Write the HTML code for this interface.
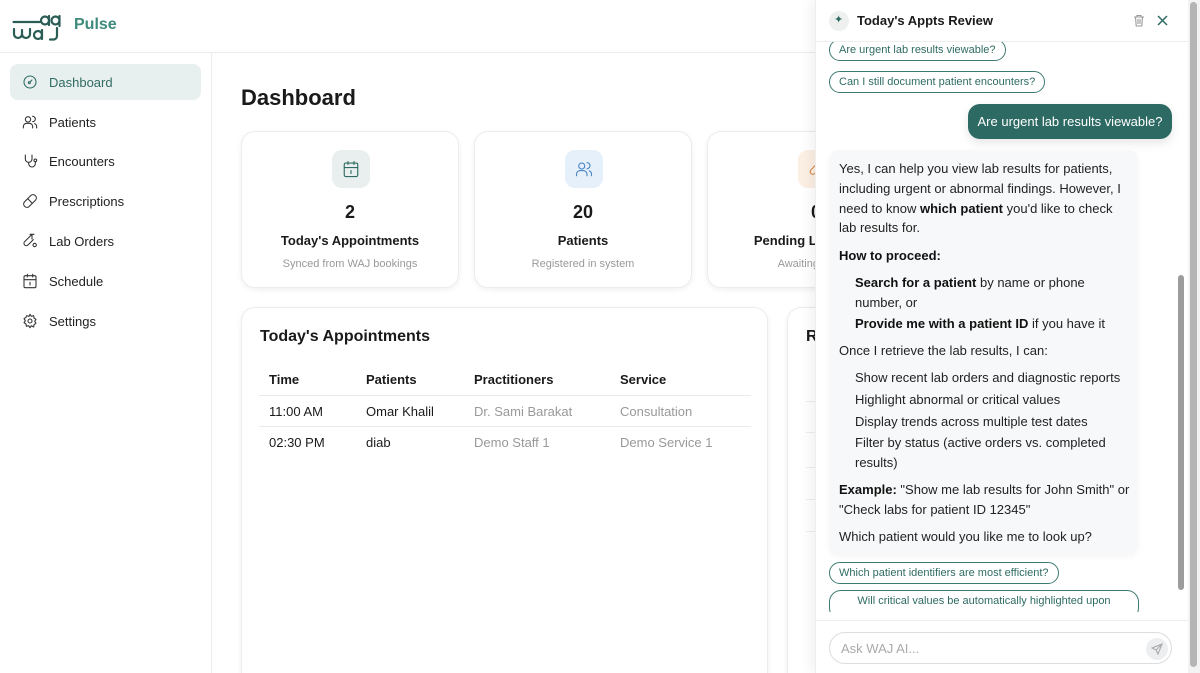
<!DOCTYPE html>
<html><head><meta charset="utf-8"><style>
*{box-sizing:border-box;margin:0;padding:0}
html,body{width:1200px;height:673px;overflow:hidden}
body{background:#fff;font-family:"Liberation Sans",sans-serif;color:#1a1a1a;position:relative}
.a{position:absolute;white-space:nowrap}
.nav{position:absolute;left:10px;width:191px;height:36px;border-radius:8px;font-size:13px;color:#222;display:flex;align-items:center}
.nav svg{position:absolute;left:12px;width:16px;height:16px;fill:none;stroke:#333;stroke-width:1.6;stroke-linecap:round;stroke-linejoin:round}
.nav span{position:absolute;left:39px}
.card{position:absolute;background:#fff;border:1px solid #ececec;border-radius:14px;box-shadow:0 2px 6px rgba(0,0,0,.06)}
.ic{position:absolute;width:38px;height:38px;border-radius:10px;left:90px;top:18px}
.ic svg{position:absolute;left:10px;top:10px;width:18px;height:18px;fill:none;stroke-width:1.5;stroke-linecap:round;stroke-linejoin:round}
.num{position:absolute;width:100%;text-align:center;top:70px;font-size:18px;font-weight:bold}
.ttl{position:absolute;width:100%;text-align:center;top:101px;font-size:13px;font-weight:bold}
.sub{position:absolute;width:100%;text-align:center;top:126px;font-size:11px;color:#999}
.chip{position:absolute;height:22px;border:1.3px solid #3d7a70;border-radius:12px;font-size:11px;color:#2f6b62;padding:0 9px;line-height:20px;white-space:nowrap}
.l{position:absolute;left:839px;font-size:13px;line-height:20px;white-space:nowrap;color:#222}
.l b{color:#111}
.ind{left:855px}
</style></head><body>
<div style="position:absolute;left:0;top:0;width:1200px;height:673px;overflow:hidden">
<!-- header -->
<div class="a" style="left:0;top:52px;width:815px;height:1px;background:#ececec"></div>
<svg class="a" style="left:12px;top:14px" width="50" height="27" viewBox="0 0 50 27" fill="none" stroke="#2b5d57" stroke-width="2.2" stroke-linecap="round">
<path d="M1.5 8H28"/><circle cx="33" cy="6.5" r="4"/><path d="M37 2v9"/><circle cx="43.5" cy="6.5" r="4"/><path d="M47.5 2v10"/>
<path d="M2 15v5a4 4 0 0 0 8 0v-4M10 20a4 4 0 0 0 8 0v-5"/><circle cx="26" cy="21" r="4"/><path d="M30 16v9"/><path d="M45 14v8a3.5 3.5 0 0 1-3.5 3.5H38"/>
</svg>
<div class="a" style="left:74px;top:16px;font-size:16px;font-weight:bold;color:#3e8a7c">Pulse</div>
<!-- sidebar -->
<div class="a" style="left:211px;top:53px;width:1px;height:620px;background:#ececec"></div>
<div class="nav" style="top:64px;background:#e8f0ef;color:#2f6b62"><svg viewBox="0 0 24 24" style="stroke:#2f6b62"><circle cx="12" cy="12" r="9"/><path d="M15 9l-3 3"/><circle cx="11" cy="13" r="1.5"/></svg><span>Dashboard</span></div>
<div class="nav" style="top:104px"><svg viewBox="0 0 24 24"><circle cx="9" cy="8" r="4"/><path d="M2 21v-2a5 5 0 0 1 5-5h4a5 5 0 0 1 5 5v2M16 3.5a4 4 0 0 1 0 8M22 21v-2a5 5 0 0 0-3-4.5"/></svg><span>Patients</span></div>
<div class="nav" style="top:143px"><svg viewBox="0 0 24 24"><path d="M5 3v6a5 5 0 0 0 10 0V3M10 14v2a5 5 0 0 0 10 0v-3"/><circle cx="20" cy="11" r="2"/></svg><span>Encounters</span></div>
<div class="nav" style="top:183px"><svg viewBox="0 0 24 24"><path d="M10.5 20.5a5 5 0 0 1-7-7l10-10a5 5 0 0 1 7 7z"/><path d="M8.5 8.5l7 7"/></svg><span>Prescriptions</span></div>
<div class="nav" style="top:223px"><svg viewBox="0 0 24 24"><path d="M14 3L4 13a3.5 3.5 0 0 0 5 5l8-8M12 2h6M15 2v7"/><circle cx="19" cy="18" r="2.5"/></svg><span>Lab Orders</span></div>
<div class="nav" style="top:263px"><svg viewBox="0 0 24 24"><rect x="3" y="4" width="18" height="18" rx="2"/><path d="M16 2v4M8 2v4M3 10h18M12 14v4"/></svg><span>Schedule</span></div>
<div class="nav" style="top:303px"><svg viewBox="0 0 24 24"><circle cx="12" cy="12" r="3"/><path d="M12 2l2 3 3.5-1 .5 3.5 3 2-2 3 2 3-3 2-.5 3.5L14 19l-2 3-2-3-3.5 1-.5-3.5-3-2 2-3-2-3 3-2L7 4l3.5 1z"/></svg><span>Settings</span></div>
<!-- main -->
<div class="a" style="left:241px;top:85px;font-size:22px;font-weight:bold">Dashboard</div>
<div class="card" style="left:241px;top:131px;width:218px;height:157px"><div class="ic" style="background:#e8efee"><svg viewBox="0 0 24 24" stroke="#2f6b62"><rect x="3" y="4" width="18" height="18" rx="2"/><path d="M16 2v4M8 2v4M3 10h18M12 14v4"/></svg></div><div class="num">2</div><div class="ttl">Today's Appointments</div><div class="sub">Synced from WAJ bookings</div></div>
<div class="card" style="left:474px;top:131px;width:218px;height:157px"><div class="ic" style="background:#e6f0fb"><svg viewBox="0 0 24 24" stroke="#4a86c5"><circle cx="9" cy="8" r="4"/><path d="M2 21v-2a5 5 0 0 1 5-5h4a5 5 0 0 1 5 5v2M16 3.5a4 4 0 0 1 0 8M22 21v-2a5 5 0 0 0-3-4.5"/></svg></div><div class="num">20</div><div class="ttl">Patients</div><div class="sub">Registered in system</div></div>
<div class="card" style="left:707px;top:131px;width:218px;height:157px"><div class="ic" style="background:#fcefe3"><svg viewBox="0 0 24 24" stroke="#d98a4a"><path d="M14 3L4 13a3.5 3.5 0 0 0 5 5l8-8"/></svg></div><div class="num">0</div><div class="ttl">Pending Lab Orders</div><div class="sub">Awaiting results</div></div>
<div class="card" style="left:241px;top:307px;width:527px;height:380px">
<div class="a" style="left:18px;top:20px;font-size:16px;font-weight:bold">Today's Appointments</div>
<div class="a" style="left:27px;top:64px;font-size:13px;font-weight:bold">Time</div>
<div class="a" style="left:124px;top:64px;font-size:13px;font-weight:bold">Patients</div>
<div class="a" style="left:232px;top:64px;font-size:13px;font-weight:bold">Practitioners</div>
<div class="a" style="left:378px;top:64px;font-size:13px;font-weight:bold">Service</div>
<div class="a" style="left:17px;top:87px;width:492px;height:1px;background:#eaeaea"></div>
<div class="a" style="left:27px;top:96px;font-size:13px">11:00 AM</div>
<div class="a" style="left:124px;top:96px;font-size:13px">Omar Khalil</div>
<div class="a" style="left:232px;top:96px;font-size:13px;color:#999">Dr. Sami Barakat</div>
<div class="a" style="left:378px;top:96px;font-size:13px;color:#999">Consultation</div>
<div class="a" style="left:17px;top:118px;width:492px;height:1px;background:#eaeaea"></div>
<div class="a" style="left:27px;top:127px;font-size:13px">02:30 PM</div>
<div class="a" style="left:124px;top:127px;font-size:13px">diab</div>
<div class="a" style="left:232px;top:127px;font-size:13px;color:#999">Demo Staff 1</div>
<div class="a" style="left:378px;top:127px;font-size:13px;color:#999">Demo Service 1</div>
</div>
<div class="card" style="left:787px;top:307px;width:200px;height:380px"><div class="a" style="left:18px;top:20px;font-size:16px;font-weight:bold">Recent</div>
<div class="a" style="left:18px;top:93px;width:180px;height:1px;background:#eee"></div><div class="a" style="left:18px;top:124px;width:180px;height:1px;background:#eee"></div><div class="a" style="left:18px;top:159px;width:180px;height:1px;background:#eee"></div><div class="a" style="left:18px;top:191px;width:180px;height:1px;background:#eee"></div><div class="a" style="left:18px;top:223px;width:180px;height:1px;background:#eee"></div></div>
<!-- chat panel -->
<div class="a" style="left:815px;top:0;width:373px;height:673px;background:#fff;box-shadow:-4px 0 12px rgba(0,0,0,.06);border-left:1px solid #eee"></div>
<div class="a" style="left:815px;top:41px;width:373px;height:1px;background:#eee"></div>
<div class="a" style="left:829px;top:11px;width:20px;height:20px;border-radius:50%;background:#eef0f0"></div>
<div class="a" style="left:834px;top:13px;font-size:11px;color:#2f6b62">✦</div>
<div class="a" style="left:857px;top:13px;font-size:13px;font-weight:bold">Today's Appts Review</div>
<svg class="a" style="left:1133px;top:14px" width="12" height="13" viewBox="0 0 12 13" fill="none" stroke="#999" stroke-width="1.1"><path d="M1 3h10M4 3V1.5h4V3M2.5 3l.7 9h5.6l.7-9M5 5v5M7 5v5"/></svg>
<svg class="a" style="left:1157px;top:15px" width="11" height="11" viewBox="0 0 11 11" stroke="#2f6b62" stroke-width="1.5"><path d="M1 1l9 9M10 1l-9 9"/></svg>
<div style="position:absolute;left:815px;top:42px;width:373px;height:570px;overflow:hidden">
<div class="chip" style="left:14px;top:-3px">Are urgent lab results viewable?</div>
<div class="chip" style="left:14px;top:29px">Can I still document patient encounters?</div>
<div class="a" style="left:153px;top:62px;width:204px;height:35px;background:#2d6a63;border-radius:12px;color:#fff;font-size:13px;line-height:35px;text-align:center;box-shadow:0 4px 10px rgba(0,0,0,.1)">Are urgent lab results viewable?</div>
<div class="a" style="left:14px;top:108px;width:309px;height:405px;background:#f7f8f9;border-radius:10px;box-shadow:0 2px 6px rgba(0,0,0,.04)"></div>
<div class="chip" style="left:14px;top:520px">Which patient identifiers are most efficient?</div>
<div class="chip" style="left:14px;top:548px;width:310px;height:30px;text-align:center">Will critical values be automatically highlighted upon</div>
</div>
<div class="l" style="top:159px">Yes, I can help you view lab results for patients,</div>
<div class="l" style="top:179px">including urgent or abnormal findings. However, I</div>
<div class="l" style="top:199px">need to know <b>which patient</b> you'd like to check</div>
<div class="l" style="top:218px">lab results for.</div>
<div class="l" style="top:246px"><b>How to proceed:</b></div>
<div class="l ind" style="top:273px"><b>Search for a patient</b> by name or phone</div>
<div class="l ind" style="top:293px">number, or</div>
<div class="l ind" style="top:314px"><b>Provide me with a patient ID</b> if you have it</div>
<div class="l" style="top:341px">Once I retrieve the lab results, I can:</div>
<div class="l ind" style="top:368px">Show recent lab orders and diagnostic reports</div>
<div class="l ind" style="top:390px">Highlight abnormal or critical values</div>
<div class="l ind" style="top:412px">Display trends across multiple test dates</div>
<div class="l ind" style="top:433px">Filter by status (active orders vs. completed</div>
<div class="l ind" style="top:453px">results)</div>
<div class="l" style="top:480px"><b>Example:</b> "Show me lab results for John Smith" or</div>
<div class="l" style="top:500px">"Check labs for patient ID 12345"</div>
<div class="l" style="top:527px">Which patient would you like me to look up?</div>
<div class="a" style="left:815px;top:620px;width:373px;height:1px;background:#eee"></div>
<div class="a" style="left:829px;top:632px;width:343px;height:32px;border:1px solid #ddd;border-radius:16px"></div>
<div class="a" style="left:841px;top:641px;font-size:13px;color:#aaa">Ask WAJ AI...</div>
<div class="a" style="left:1146px;top:638px;width:22px;height:22px;border-radius:50%;background:#eceeef"></div>
<svg class="a" style="left:1151px;top:643px" width="12" height="12" viewBox="0 0 12 12" fill="none" stroke="#aaa" stroke-width="1.1"><path d="M11 1L1 5l4 2 2 4zM11 1L5 7"/></svg>
<!-- scrollbars -->
<div class="a" style="left:1178px;top:275px;width:6px;height:315px;border-radius:3px;background:#9c9c9c"></div>
<div class="a" style="left:1188px;top:0;width:12px;height:673px;background:#f3f3f3"></div>
<div class="a" style="left:1190px;top:2px;width:7px;height:665px;border-radius:4px;background:#b5b5b5"></div>
</div>
</body></html>
